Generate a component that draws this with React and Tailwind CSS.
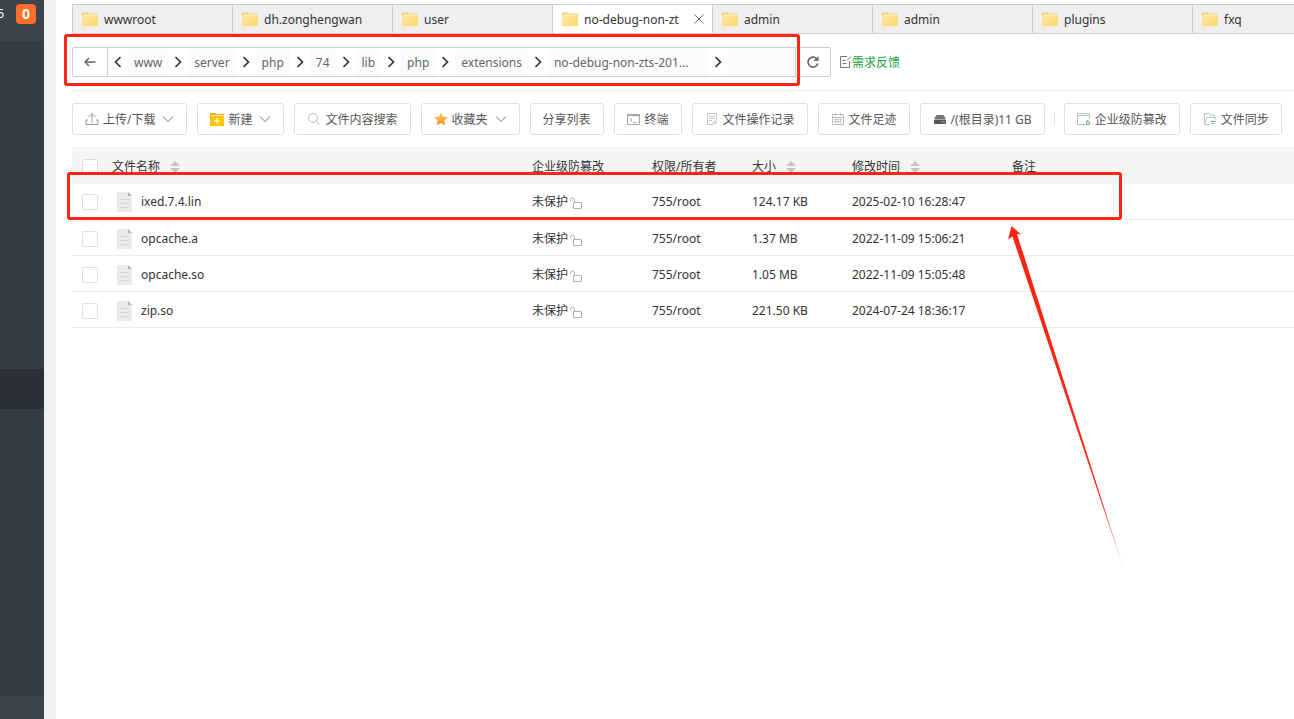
import React, { useState } from 'react';

const tabs = [
  { id: 1, name: 'wwwroot' },
  { id: 2, name: 'dh.zonghengwan' },
  { id: 3, name: 'user' },
  { id: 4, name: 'no-debug-non-zt' },
  { id: 5, name: 'admin' },
  { id: 6, name: 'admin' },
  { id: 7, name: 'plugins' },
  { id: 8, name: 'fxq' },
];

const path = ['www', 'server', 'php', '74', 'lib', 'php', 'extensions', 'no-debug-non-zts-201...'];

const files = [
  { name: 'ixed.7.4.lin', owner: '755/root', size: '124.17 KB', time: '2025-02-10 16:28:47' },
  { name: 'opcache.a', owner: '755/root', size: '1.37 MB', time: '2022-11-09 15:06:21' },
  { name: 'opcache.so', owner: '755/root', size: '1.05 MB', time: '2022-11-09 15:05:48' },
  { name: 'zip.so', owner: '755/root', size: '221.50 KB', time: '2024-07-24 18:36:17' },
];

const FolderIcon = () => (
  <svg width="16" height="14" viewBox="0 0 16 14" className="shrink-0">
    <defs>
      <linearGradient id="folder" x1="0" y1="0" x2="1" y2="1">
        <stop offset="0" stopColor="#ffe9a8" />
        <stop offset="1" stopColor="#ffd768" />
      </linearGradient>
    </defs>
    <path d="M0 1.500Q0 .5 1 .5h4.500l1.500 1H15q1 0 1 1V13q0 1-1 1H1q-1 0-1-1z" fill="#f9d071" />
    <path d="M1 2.500h14v2H1z" fill="#fff3cf" />
    <path d="M0 4.300Q0 3.500 1 3.500h14q1 0 1 .8V13q0 1-1 1H1q-1 0-1-1z" fill="url(#folder)" />
  </svg>
);

const FileIcon = () => (
  <svg width="15" height="20" viewBox="0 0 15 20" className="shrink-0">
    <path d="M0 0h11l4 4v16H0z" fill="#ebebeb" />
    <path d="M11 0l4 4h-4z" fill="#b5b5b5" />
    <path d="M3 7.500h9M3 11.500h9M3 15.500h9" stroke="#d2d2d2" />
  </svg>
);

const Chevron = ({ left = false }) => (
  <svg width="8" height="12" viewBox="0 0 8 12" fill="none" stroke="#333" strokeWidth="1.700">
    <path d={left ? 'M6.500 1L1.500 6l5 5' : 'M1.500 1l5 5-5 5'} />
  </svg>
);

const DownIcon = () => (
  <svg width="12" height="8" viewBox="0 0 12 8" fill="none" stroke="#777" className="ml-[7px]">
    <path d="M1 1.500l5 5 5-5" />
  </svg>
);

const UploadIcon = () => (
  <svg width="14" height="14" viewBox="0 0 14 14" fill="none" stroke="#999">
    <path d="M7 11V2M3.500 5L7 1.500 10.500 5M3 8H1v4.500h12V8h-2" />
  </svg>
);

const NewFolderIcon = () => (
  <svg width="14" height="13" viewBox="0 0 14 13">
    <path d="M0 0h5l1 1h8v12H0z" fill="#f9ad05" />
    <path d="M0 3h14v10H0z" fill="#fdc500" />
    <path d="M1 2.500h13" stroke="#fff" strokeWidth=".8" />
    <path d="M7 5v6M4 8h6" stroke="#fff" strokeWidth="1.200" />
  </svg>
);

const SearchIcon = () => (
  <svg width="12" height="12" viewBox="0 0 12 12" fill="none" stroke="#bbb">
    <circle cx="5" cy="5" r="4.500" />
    <path d="M8.500 8.500l3 3" />
  </svg>
);

const StarIcon = () => (
  <svg width="14" height="14" viewBox="0 0 14 14">
    <defs>
      <linearGradient id="star" x1="0" y1="0" x2="0" y2="1">
        <stop offset="0" stopColor="#fbc95c" />
        <stop offset="1" stopColor="#f58f1d" />
      </linearGradient>
    </defs>
    <path d="M7 .5l2 4.200 4.700.6-3.400 3.200.9 4.800L7 11l-4.200 2.300.9-4.800L.3 5.300 5 4.700z" fill="url(#star)" />
  </svg>
);

const TerminalIcon = () => (
  <svg width="13" height="11" viewBox="0 0 13 11" fill="none" stroke="#a8a8a8">
    <path d="M.5.5h12v10H.5z" />
    <path d="M0 1.200h13" strokeWidth="2" />
    <path d="M3 4l2 2-2 2M6.500 8.500h3" />
  </svg>
);

const RecordIcon = () => (
  <svg width="12" height="12" viewBox="0 0 12 12" fill="none" stroke="#c0c0c0">
    <path d="M7 11.500H1.500V.5h9V7M3 3.500h6M3 5.500h6M3 7.500h3" />
    <circle cx="8.500" cy="10" r="1.300" />
    <path d="M9.800 10V7" />
  </svg>
);

const CalendarIcon = () => (
  <svg width="12" height="12" viewBox="0 0 12 12" fill="none" stroke="#bdbdbd">
    <path d="M.5 1.500h11v10H.5zM.5 4.500h11M3.500 0v3M8.500 0v3" />
    <path d="M2 6.500h8M2 8.500h8M3.500 5.500v5M6 5.500v5M8.500 5.500v5" strokeWidth=".7" />
  </svg>
);

const DiskIcon = () => (
  <svg width="12" height="9" viewBox="0 0 12 9">
    <path d="M2.500 0h7L12 4H0z" fill="#777" />
    <rect y="4.500" width="12" height="4.500" rx="1" fill="#555" />
    <path d="M7.500 6.800h1M9.500 6.800h1" stroke="#fff" />
  </svg>
);

const ShieldIcon = () => (
  <svg width="13" height="12" viewBox="0 0 13 12" fill="none" stroke="#bdbdbd">
    <path d="M8 11.500H.5V.5h12V6M.5 2.500h12" />
    <path d="M9.500 9h3v2.500h-3zM10 9V7.500h1.500" stroke="#5fbf75" />
  </svg>
);

const SyncIcon = () => (
  <svg width="12" height="12" viewBox="0 0 12 12" fill="none" stroke="#bdbdbd">
    <path d="M5.500 11.500h-5V.5H5l1 1.500h4.500v2.500M.5 11L3 4.500h8.500l-.5 2" />
    <path d="M6.500 8.500h5M7.500 10.500h3" stroke="#5fbf75" />
  </svg>
);

const UnlockIcon = () => (
  <svg width="12" height="12" viewBox="0 0 12 12" fill="none" stroke="#b0b0b0" className="mt-0.5">
    <rect x="3.500" y="5.500" width="8" height="6" rx=".5" />
    <path d="M4.500 5.500V3a2 2 0 0 0-4 0v1" />
  </svg>
);

const SortIcon = () => (
  <svg width="10" height="12" viewBox="0 0 10 12" fill="#c4c4c4">
    <path d="M5 0l5 5H0zM5 12l5-5H0z" />
  </svg>
);

const ToolButton = ({ icon, children, dropdown }) => (
  <button className="flex h-8 shrink-0 items-center rounded-[3px] border border-[#dcdfe6] bg-white px-3 text-[#555]">
    {icon && <span className="mr-1 flex w-[14px] justify-center">{icon}</span>}
    <span className="pt-0.5">{children}</span>
    {dropdown && <DownIcon />}
  </button>
);

const Checkbox = ({ label }) => (
  <input
    type="checkbox"
    aria-label={label}
    className="block size-4 appearance-none rounded-[2px] border border-[#dcdfe6] bg-white checked:bg-green-600"
  />
);

const Sidebar = () => (
  <aside className="flex w-11 shrink-0 flex-col overflow-hidden bg-[#353d44]">
    <div className="flex h-[41px] items-start justify-end bg-[#3c444d] pt-1 pr-2 text-white">
      <span className="mr-3 shrink-0 text-xs leading-5">5</span>
      <span className="size-5 shrink-0 rounded bg-[#ff6d29] text-center text-sm leading-5 font-bold">0</span>
    </div>
    <div className="h-[328px]" />
    <div className="h-10 bg-[#2c3138]" />
    <div className="flex-1" />
    <div className="h-[23px] bg-[#3d444e]" />
  </aside>
);

const TabBar = ({ active, onSelect }) => (
  <div className="flex h-[30px] overflow-hidden border-y border-[#ccc] bg-[#efefef]">
    {tabs.map((tab) => (
      <div
        key={tab.id}
        className={`flex w-40 shrink-0 items-center border-l border-[#ccc] pr-2 pl-[9px] ${
          tab.id === active ? 'bg-white' : 'bg-[#efefef]'
        }`}
      >
        <button onClick={() => onSelect(tab.id)} className="flex min-w-0 flex-1 items-center gap-1.5">
          <FolderIcon />
          <span className="overflow-hidden pt-0.5 whitespace-nowrap">{tab.name}</span>
        </button>
        {tab.id === active && (
          <button aria-label="关闭" className="ml-2">
            <svg width="10" height="10" viewBox="0 0 10 10" stroke="#777" fill="none">
              <path d="M.5.5l9 9M9.500.5l-9 9" />
            </svg>
          </button>
        )}
      </div>
    ))}
  </div>
);

const PathBar = () => (
  <div className="flex h-[30px] items-center text-[#666]">
    <button aria-label="返回" className="flex h-full w-9 items-center justify-center rounded-l-[2px] border border-[#ccc]">
      <svg width="12" height="10" viewBox="0 0 12 10" fill="none" stroke="#666" strokeWidth="1.500">
        <path d="M11.500 5H1M5 1L1 5l4 4" />
      </svg>
    </button>
    <div className="flex h-full w-[688px] items-center overflow-hidden border-y border-r border-[#ccc] bg-[#fbfbfb]">
      <span className="flex h-full w-5 shrink-0 items-center justify-center bg-white">
        <Chevron left />
      </span>
      {path.map((part, i) => (
        <React.Fragment key={i}>
          <button
            className={`h-full shrink-0 px-1.5 pt-0.5 text-left whitespace-nowrap ${i === path.length - 1 ? 'w-40' : ''}`}
          >
            {part}
          </button>
          <span className="flex h-full w-5 shrink-0 items-center justify-center bg-white">
            <Chevron />
          </span>
        </React.Fragment>
      ))}
    </div>
    <button aria-label="刷新" className="flex h-full w-[35px] items-center justify-center rounded-r-[2px] border-y border-r border-[#ccc]">
      <svg width="12" height="12" viewBox="0 0 12 12" fill="none" stroke="#666" strokeWidth="1.700">
        <path d="M10.300 3.500A5 5 0 1 0 10.800 7.500" />
        <path d="M11.500 0v5h-5z" fill="#666" stroke="none" />
      </svg>
    </button>
    <a href="#feedback" className="ml-2 flex items-center text-[#20a53a]">
      <svg width="13" height="12" viewBox="0 0 13 12" fill="none" stroke="#777">
        <path d="M8 .5H1.500v11h9V5M3.500 4.500h3M3.500 7.500h4M8 4.500l4-4" />
      </svg>
      <span className="pt-0.5">需求反馈</span>
    </a>
  </div>
);

const Toolbar = () => (
  <div className="flex items-center gap-2.5 overflow-hidden">
    <ToolButton icon={<UploadIcon />} dropdown>上传/下载</ToolButton>
    <ToolButton icon={<NewFolderIcon />} dropdown>新建</ToolButton>
    <ToolButton icon={<SearchIcon />}>文件内容搜索</ToolButton>
    <ToolButton icon={<StarIcon />} dropdown>收藏夹</ToolButton>
    <ToolButton>分享列表</ToolButton>
    <ToolButton icon={<TerminalIcon />}>终端</ToolButton>
    <ToolButton icon={<RecordIcon />}>文件操作记录</ToolButton>
    <ToolButton icon={<CalendarIcon />}>文件足迹</ToolButton>
    <ToolButton icon={<DiskIcon />}>/(根目录)11 GB</ToolButton>
    <div className="-mx-px h-3 w-px shrink-0 bg-[#dcdfe6]" />
    <ToolButton icon={<ShieldIcon />}>企业级防篡改</ToolButton>
    <ToolButton icon={<SyncIcon />}>文件同步</ToolButton>
  </div>
);

const SortHeader = ({ children }) => (
  <button className="flex items-center gap-2.5">
    {children}
    <SortIcon />
  </button>
);

const FileTable = () => (
  <table className="w-full table-fixed border-collapse text-left text-[#333]">
    <colgroup>
      <col className="w-10" />
      <col className="w-[420px]" />
      <col className="w-[120px]" />
      <col className="w-[100px]" />
      <col className="w-[100px]" />
      <col className="w-40" />
      <col />
    </colgroup>
    <thead>
      <tr className="h-9 border-t border-[#ebeef5] bg-[#f5f5f5] [&>th]:pt-0.5 [&>th]:font-normal">
        <th className="pl-2.5"><Checkbox label="全选" /></th>
        <th><SortHeader>文件名称</SortHeader></th>
        <th>企业级防篡改</th>
        <th>权限/所有者</th>
        <th><SortHeader>大小</SortHeader></th>
        <th><SortHeader>修改时间</SortHeader></th>
        <th>备注</th>
      </tr>
    </thead>
    <tbody>
      {files.map((file) => (
        <tr key={file.name} className="h-9 border-b border-[#ebebeb] [&>td]:pt-0.5">
          <td className="pl-2.5"><Checkbox label={file.name} /></td>
          <td>
            <div className="flex items-center gap-[9px] pl-[5px]">
              <FileIcon />
              {file.name}
            </div>
          </td>
          <td>
            <button className="flex items-center gap-0.5">
              未保护
              <UnlockIcon />
            </button>
          </td>
          <td>{file.owner}</td>
          <td>{file.size}</td>
          <td>{file.time}</td>
          <td />
        </tr>
      ))}
    </tbody>
  </table>
);

// Red marker boxes and arrow drawn over the page
const Annotations = () => (
  <div className="pointer-events-none absolute inset-0 overflow-hidden">
    <div className="absolute top-[34px] left-16 h-[52px] w-[736px] rounded-[3px] border-3 border-[#ff2414]" />
    <div className="absolute top-[172px] left-[67px] h-12 w-[1055px] rounded-[3px] border-3 border-[#ff2414]" />
    <svg width="120" height="350" viewBox="0 0 120 350" className="absolute top-[224px] left-[1006px]">
      <defs>
        <linearGradient id="tail" x1="0" y1="0" x2="0" y2="1">
          <stop offset=".8" stopColor="#ff2414" />
          <stop offset="1" stopColor="#ff2414" stopOpacity=".2" />
        </linearGradient>
      </defs>
      <path d="M5.500 2L15 10.500l-4-.5L119 349 6.500 12.500 2 15.500z" fill="url(#tail)" />
    </svg>
  </div>
);

const App = () => {
  const [activeTab, setActiveTab] = useState(4);

  return (
    <div className="relative flex min-h-screen overflow-hidden bg-white font-['Noto_Sans','Noto_Sans_CJK_SC',sans-serif] text-xs text-[#333]">
      <Sidebar />
      <div className="w-3 shrink-0 bg-[#f2f2f2]" />
      <main className="min-w-0 flex-1 pt-1 pl-4">
        <TabBar active={activeTab} onSelect={setActiveTab} />
        <div className="mt-[13px]">
          <PathBar />
        </div>
        <div className="mt-[13px] border-t border-[#ebebeb] pt-3">
          <Toolbar />
        </div>
        <div className="mt-3">
          <FileTable />
        </div>
      </main>
      <Annotations />
    </div>
  );
};

export default App;
